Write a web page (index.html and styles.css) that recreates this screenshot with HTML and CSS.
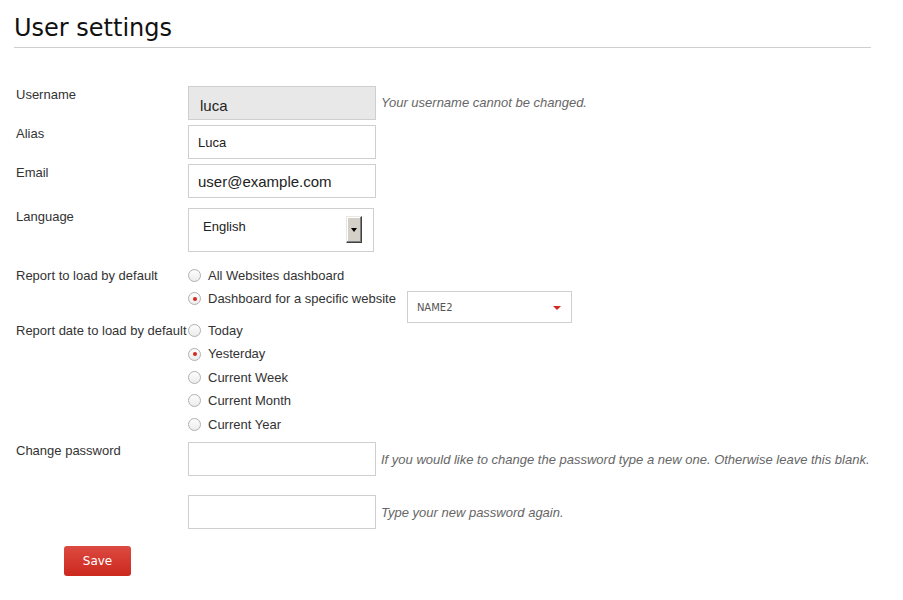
FILE: index.html
```html
<!DOCTYPE html>
<html>
<head>
<meta charset="utf-8">
<title>User settings</title>
<link rel="stylesheet" href="styles.css">
</head>
<body>
<div class="page">
  <h2 class="title">User settings</h2>
  <form class="form">
    <div class="row r-username">
      <div class="label">Username</div>
      <input class="field field-disabled field-big" type="text" value="luca" readonly>
      <span class="hint h-user">Your username cannot be changed.</span>
    </div>
    <div class="row r-alias">
      <div class="label">Alias</div>
      <input class="field" type="text" value="Luca">
    </div>
    <div class="row r-email">
      <div class="label">Email</div>
      <input class="field field-big field-email" type="text" value="user@example.com">
    </div>
    <div class="row r-lang">
      <div class="label">Language</div>
      <div class="select">
        <span class="select-text">English</span>
        <span class="select-btn"><span class="select-arrow"></span></span>
      </div>
    </div>
    <div class="row r-report">
      <div class="label label-radio">Report to load by default</div>
      <div class="options">
        <div class="opt"><span class="radio"></span>All Websites dashboard</div>
        <div class="opt"><span class="radio checked"></span>Dashboard for a specific website
          <div class="site-select"><span>NAME2</span><span class="tri"></span></div>
        </div>
      </div>
    </div>
    <div class="row r-date">
      <div class="label label-radio">Report date to load by default</div>
      <div class="options">
        <div class="opt"><span class="radio"></span>Today</div>
        <div class="opt"><span class="radio checked"></span>Yesterday</div>
        <div class="opt"><span class="radio"></span>Current Week</div>
        <div class="opt"><span class="radio"></span>Current Month</div>
        <div class="opt"><span class="radio"></span>Current Year</div>
      </div>
    </div>
    <div class="row r-pw1">
      <div class="label">Change password</div>
      <input class="field" type="password" value="">
      <span class="hint h-pw1">If you would like to change the password type a new one. Otherwise leave this blank.</span>
    </div>
    <div class="row r-pw2">
      <div class="label"></div>
      <input class="field" type="password" value="">
      <span class="hint h-pw2">Type your new password again.</span>
    </div>
    <div class="row r-save">
      <button class="save" type="button">Save</button>
    </div>
  </form>
</div>
</body>
</html>
```
FILE: styles.css
```css
html, body {
  margin: 0;
  padding: 0;
  background: #fff;
}
body {
  font-family: "Liberation Sans", Arial, sans-serif;
  font-size: 13px;
  color: #333;
}
.page {
  width: 857px;
  margin-left: 14px;
}
.title {
  margin: 14px 0 0 0;
  padding: 0 0 5px 0;
  font-family: "DejaVu Sans", Verdana, sans-serif;
  font-size: 24px;
  line-height: 28px;
  font-weight: normal;
  color: #111;
  border-bottom: 1px solid #cfcfcf;
}
.form {
  padding-left: 2px;
}
.row {
  display: flex;
  align-items: flex-start;
}
.label {
  flex: none;
  width: 172px;
  padding-top: 1px;
  line-height: 16px;
  white-space: nowrap;
  color: #333;
}
.label-radio {
  padding-top: 0;
  line-height: 23.4px;
}
.r-username { margin-top: 38px; }
.r-alias { margin-top: 5px; }
.r-email { margin-top: 5px; }
.r-lang { margin-top: 10px; }
.r-report { margin-top: 11.7px; margin-bottom: 8.5px; }
.r-date { margin-top: 0; }
.r-pw1 { margin-top: 6px; }
.r-pw2 { margin-top: 19px; }
.r-save { margin-top: 17px; }

.field {
  box-sizing: border-box;
  width: 188px;
  height: 34px;
  margin: 0;
  border: 1px solid #cfcfcf;
  border-radius: 0;
  padding: 0 9px;
  font-family: "Liberation Sans", Arial, sans-serif;
  font-size: 13px;
  color: #222;
  background: #fff;
  outline: none;
}
.field-big {
  font-size: 15px;
}
.field-disabled {
  background: #e8e8e8;
  padding-top: 4px;
  padding-left: 11px;
}
.hint {
  margin-left: 5px;
  font-style: italic;
  line-height: 16px;
  color: #666;
  white-space: nowrap;
}
.h-user { margin-top: 8.7px; }
.h-pw1 { margin-top: 9.7px; }
.h-pw2 { margin-top: 9.7px; }

.select {
  box-sizing: border-box;
  width: 186px;
  height: 44px;
  border: 1px solid #cfcfcf;
  display: flex;
  align-items: flex-start;
  justify-content: space-between;
  padding: 0 11px 0 14px;
}
.select-text {
  margin-top: 9.7px;
  line-height: 16px;
  color: #222;
}
.select-btn {
  box-sizing: border-box;
  margin-top: 7px;
  width: 16px;
  height: 27px;
  background: #d4d0c8;
  border-top: 1px solid #e9e7e3;
  border-left: 1px solid #e9e7e3;
  border-right: 1px solid #404040;
  border-bottom: 1px solid #404040;
  box-shadow: inset -1px -1px 0 #808080, inset 1px 1px 0 #fff;
  display: flex;
  align-items: center;
  justify-content: center;
}
.select-arrow {
  width: 0;
  height: 0;
  border-left: 3.5px solid transparent;
  border-right: 3.5px solid transparent;
  border-top: 4px solid #000;
  margin-top: 1px;
}

.options {
  display: flex;
  flex-direction: column;
}
.opt {
  display: flex;
  align-items: center;
  height: 23.4px;
  line-height: 23.4px;
  white-space: nowrap;
  color: #333;
}
.radio {
  flex: none;
  box-sizing: border-box;
  width: 13px;
  height: 13px;
  margin-right: 7px;
  border-radius: 50%;
  border: 1px solid #b0b0b0;
  background: linear-gradient(#fdfdfd, #ececec);
  display: flex;
  align-items: center;
  justify-content: center;
}
.radio.checked::after {
  content: "";
  width: 4px;
  height: 4px;
  border-radius: 50%;
  background: #d4291f;
}
.site-select {
  align-self: flex-start;
  box-sizing: border-box;
  margin-top: 4px;
  margin-left: 11px;
  width: 165px;
  height: 32px;
  border: 1px solid #cfcfcf;
  padding: 2px 10px 0 9px;
  display: flex;
  align-items: center;
  justify-content: space-between;
  font-family: "DejaVu Sans", Verdana, sans-serif;
  font-size: 10px;
  line-height: 12px;
  color: #555;
  background: #fff;
}
.tri {
  width: 0;
  height: 0;
  border-left: 4px solid transparent;
  border-right: 4px solid transparent;
  border-top: 4px solid #d4291f;
}

.save {
  margin: 0 0 0 48px;
  width: 67px;
  height: 30px;
  border: none;
  border-radius: 3px;
  padding: 0;
  background: linear-gradient(#dc4a41, #cc281e);
  color: #fff;
  font-family: "DejaVu Sans", Verdana, sans-serif;
  font-size: 12px;
  cursor: pointer;
}
```
